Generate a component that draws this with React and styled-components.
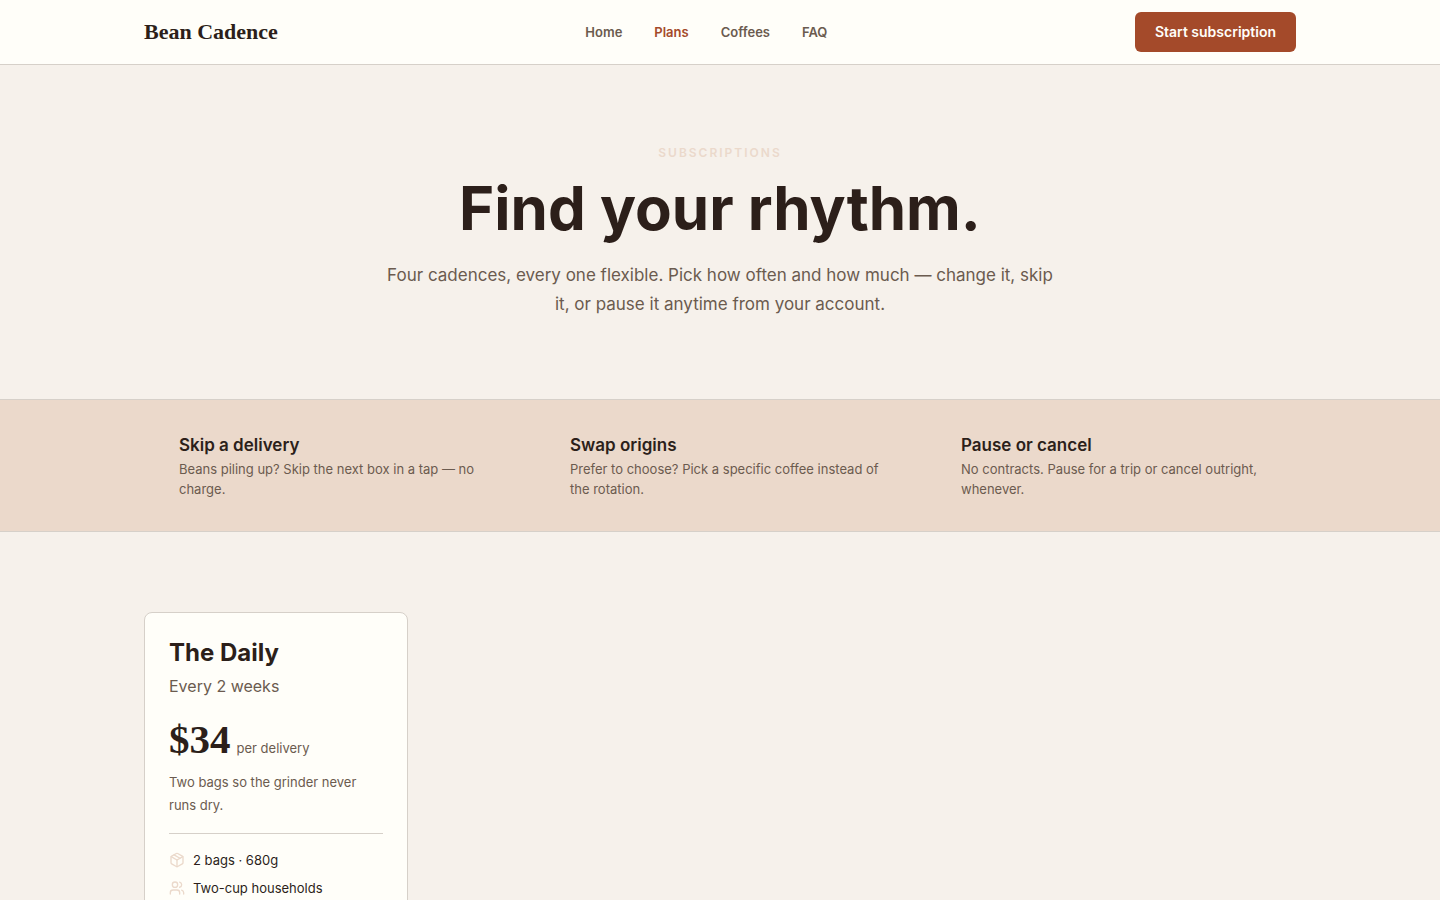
import React from 'react';
import styled, { createGlobalStyle, ThemeProvider } from 'styled-components';
import { Package, Users } from 'lucide-react';

const theme = {
  page: '#f6f1eb',
  surface: '#fffef9',
  sand: '#ebd9cb',
  line: '#d6d0c9',
  ink: '#2c1f1a',
  muted: '#6b5b4f',
  accent: '#a44a2a',
  sans: 'Inter, "Liberation Sans", sans-serif',
  serif: '"Liberation Serif", serif',
};

const GlobalStyle = createGlobalStyle`
  *, *::before, *::after { box-sizing: border-box; }
  body {
    margin: 0;
    background: ${theme.page};
    color: ${theme.ink};
    font-family: ${theme.sans};
  }
  h1, h2, h3, p, ul { margin: 0; padding: 0; }
`;

const Container = styled.div`
  width: 80%;
  max-width: 1152px;
  margin: 0 auto;
`;

const Header = styled.header`
  background: ${({ theme }) => theme.surface};
  border-bottom: 1px solid ${({ theme }) => theme.line};
`;

const HeaderRow = styled(Container)`
  display: flex;
  align-items: center;
  justify-content: space-between;
  min-height: 64px;
`;

const Logo = styled.a`
  font: 700 22px/28px ${({ theme }) => theme.serif};
  color: ${({ theme }) => theme.ink};
  text-decoration: none;
`;

const Nav = styled.nav`
  display: flex;
  gap: 32px;
`;

const NavLink = styled.a`
  font-size: 13px;
  line-height: 20px;
  font-weight: 600;
  text-decoration: none;
  color: ${({ theme, $active }) => ($active ? theme.accent : theme.muted)};
`;

const Button = styled.button`
  height: 40px;
  padding: 0 20px;
  border: 0;
  border-radius: 6px;
  background: ${({ theme }) => theme.accent};
  color: ${({ theme }) => theme.surface};
  font: 600 14px/20px ${({ theme }) => theme.sans};
  cursor: pointer;
`;

const Hero = styled.section`
  padding: 80px 24px;
  text-align: center;
`;

const Eyebrow = styled.p`
  font-size: 12px;
  line-height: 16px;
  font-weight: 600;
  letter-spacing: 2px;
  text-transform: uppercase;
  color: ${({ theme }) => theme.sand};
`;

const HeroTitle = styled.h1`
  margin-top: 12px;
  font-size: 60px;
  line-height: 70px;
  font-weight: 700;
`;

const HeroText = styled.p`
  max-width: 680px;
  margin: 18px auto 0;
  font-size: 17px;
  line-height: 29px;
  color: ${({ theme }) => theme.muted};
`;

const Band = styled.section`
  background: ${({ theme }) => theme.sand};
  border-top: 1px solid ${({ theme }) => theme.line};
  border-bottom: 1px solid ${({ theme }) => theme.line};
`;

const PerkGrid = styled(Container)`
  display: grid;
  grid-template-columns: repeat(3, 1fr);
  gap: 56px;
  padding: 32px 0 32px 35px;
`;

const Perk = styled.div`
  max-width: 320px;
`;

const PerkTitle = styled.h3`
  font-size: 17px;
  line-height: 27px;
  font-weight: 600;
`;

const PerkText = styled.p`
  font-size: 13px;
  line-height: 20px;
  color: ${({ theme }) => theme.muted};
`;

const PlanGrid = styled(Container)`
  display: grid;
  grid-template-columns: repeat(4, 1fr);
  gap: 32px;
  padding: 80px 0;
`;

const Card = styled.article`
  padding: 24px;
  border: 1px solid ${({ theme }) => theme.line};
  border-radius: 8px;
  background: ${({ theme }) => theme.surface};
`;

const PlanName = styled.h2`
  font-size: 24px;
  line-height: 32px;
  font-weight: 700;
`;

const Cadence = styled.p`
  margin-top: 4px;
  font-size: 16px;
  line-height: 26px;
  color: ${({ theme }) => theme.muted};
`;

const PriceRow = styled.p`
  display: flex;
  align-items: baseline;
  gap: 6px;
  margin-top: 16px;
`;

const Price = styled.strong`
  font-family: ${({ theme }) => theme.serif};
  font-size: 41px;
  line-height: 48px;
  font-weight: 700;
`;

const PriceUnit = styled.span`
  font-size: 13px;
  line-height: 20px;
  color: ${({ theme }) => theme.muted};
`;

const PlanText = styled.p`
  margin-top: 8px;
  font-size: 13px;
  line-height: 23px;
  color: ${({ theme }) => theme.muted};
`;

const FeatureList = styled.ul`
  display: grid;
  gap: 8px;
  margin-top: 16px;
  padding-top: 16px;
  border-top: 1px solid ${({ theme }) => theme.line};
  list-style: none;
`;

const Feature = styled.li`
  display: flex;
  align-items: center;
  gap: 8px;
  font-size: 13px;
  line-height: 20px;

  svg {
    flex: none;
    color: ${({ theme }) => theme.sand};
  }
`;

const links = ['Home', 'Plans', 'Coffees', 'FAQ'];

const perks = [
  { title: 'Skip a delivery', text: 'Beans piling up? Skip the next box in a tap — no charge.' },
  { title: 'Swap origins', text: 'Prefer to choose? Pick a specific coffee instead of the rotation.' },
  { title: 'Pause or cancel', text: 'No contracts. Pause for a trip or cancel outright, whenever.' },
];

const features = [
  { Icon: Package, text: '2 bags · 680g' },
  { Icon: Users, text: 'Two-cup households' },
];

export default function App() {
  return (
    <ThemeProvider theme={theme}>
      <GlobalStyle />
      <Header>
        <HeaderRow>
          <Logo href="#home">Bean Cadence</Logo>
          <Nav>
            {links.map((label) => (
              <NavLink key={label} href={`#${label.toLowerCase()}`} $active={label === 'Plans'}>
                {label}
              </NavLink>
            ))}
          </Nav>
          <Button type="button">Start subscription</Button>
        </HeaderRow>
      </Header>
      <main>
        <Hero>
          <Eyebrow>Subscriptions</Eyebrow>
          <HeroTitle>Find your rhythm.</HeroTitle>
          <HeroText>
            Four cadences, every one flexible. Pick how often and how much — change it, skip it, or
            pause it anytime from your account.
          </HeroText>
        </Hero>
        <Band>
          <PerkGrid>
            {perks.map(({ title, text }) => (
              <Perk key={title}>
                <PerkTitle>{title}</PerkTitle>
                <PerkText>{text}</PerkText>
              </Perk>
            ))}
          </PerkGrid>
        </Band>
        <PlanGrid>
          <Card>
            <PlanName>The Daily</PlanName>
            <Cadence>Every 2 weeks</Cadence>
            <PriceRow>
              <Price>$34</Price>
              <PriceUnit>per delivery</PriceUnit>
            </PriceRow>
            <PlanText>Two bags so the grinder never runs dry.</PlanText>
            <FeatureList>
              {features.map(({ Icon, text }) => (
                <Feature key={text}>
                  <Icon size={16} strokeWidth={2} aria-hidden="true" />
                  {text}
                </Feature>
              ))}
            </FeatureList>
          </Card>
        </PlanGrid>
      </main>
    </ThemeProvider>
  );
}
